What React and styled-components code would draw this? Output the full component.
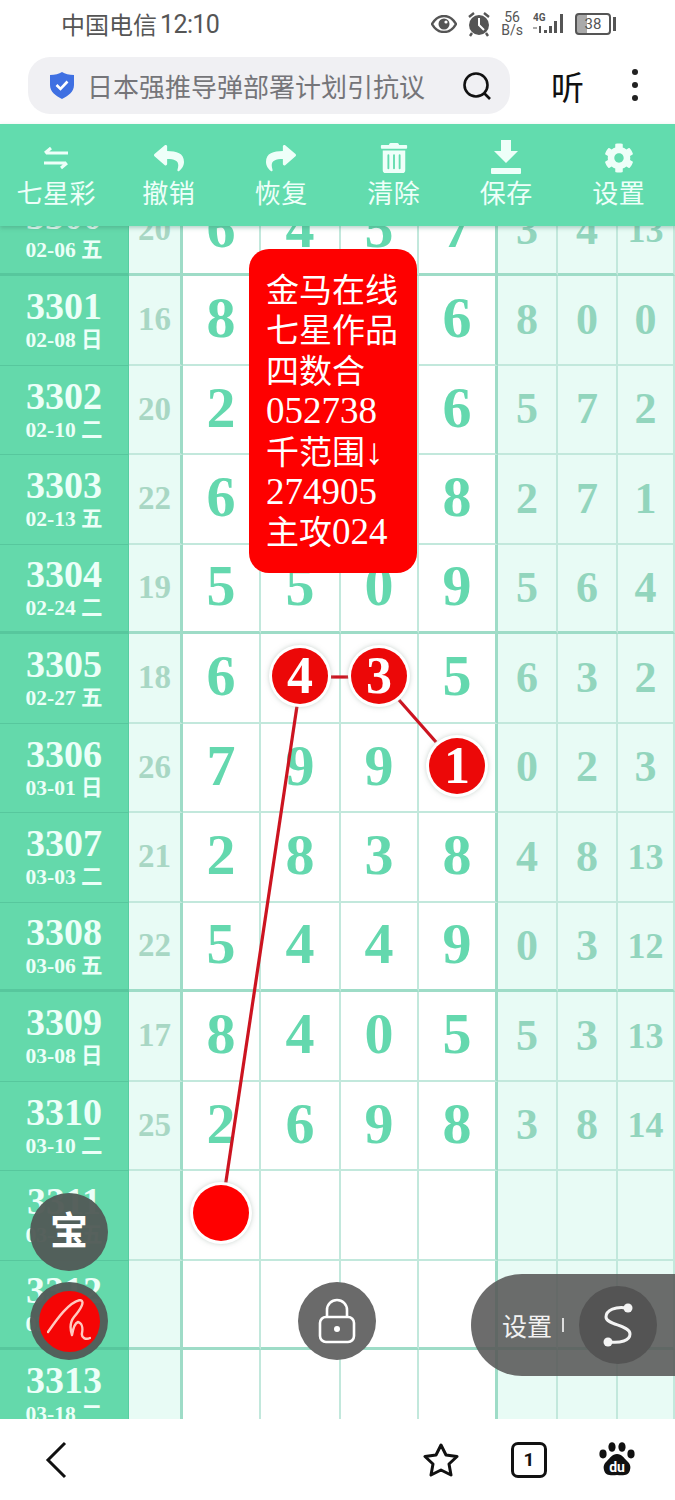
import React from 'react'
import styled, { createGlobalStyle } from 'styled-components'
import { FaReply, FaShare, FaTrashAlt, FaCog } from 'react-icons/fa'

const SANS = '"Noto Sans CJK SC", "Noto Sans", sans-serif'
const SERIF = '"Liberation Serif", "Noto Sans CJK SC", serif'

const Global = createGlobalStyle`
    html, body {
        margin: 0;
        padding: 0;
        background: #fff;
    }
    body {
        font-family: ${SANS};
    }
`

const Page = styled.div`
    position: relative;
    width: 675px;
    height: 1500px;
    overflow: hidden;
    display: flex;
    flex-direction: column;
    background: #fff;
`

const StatusBar = styled.div`
    height: 52px;
    display: flex;
    align-items: center;
    justify-content: space-between;
    padding: 0 64px 4px 61px;
    box-sizing: border-box;
    color: #555;
`

const Carrier = styled.div`
    font-size: 24px;
    line-height: 1;
    display: flex;
    align-items: center;
    gap: 3px;
`

const Clock = styled.span`
    font-family: "Roboto", sans-serif;
    font-size: 25px;
    letter-spacing: -0.6px;
`

const StatusIcons = styled.div`
    display: flex;
    align-items: center;
    gap: 10px;
    color: #555;
`

const Speed = styled.div`
    font-family: "Roboto", sans-serif;
    font-size: 14px;
    line-height: 13px;
    text-align: center;
`

const Battery = styled.div`
    position: relative;
    width: 32px;
    height: 18px;
    border: 2px solid #555;
    border-radius: 4px;
    font-family: "Roboto", sans-serif;
    font-size: 15px;
    line-height: 18px;
    text-align: center;
    background: linear-gradient(90deg, #aaa 30%, #fff 30%);
    &::after {
        content: '';
        position: absolute;
        right: -7px;
        top: 2px;
        width: 3px;
        height: 14px;
        background: #555;
    }
`

const AddressRow = styled.div`
    height: 72px;
    display: flex;
    align-items: flex-start;
    padding: 5px 0 0 28px;
    box-sizing: border-box;
`

const AddressBar = styled.div`
    width: 482px;
    height: 57px;
    border-radius: 22px;
    background: #f0f0f3;
    display: flex;
    align-items: center;
    padding: 0 18px 0 22px;
    box-sizing: border-box;
`

const AddressText = styled.div`
    flex: 1;
    margin-left: 13px;
    font-size: 26px;
    color: #757579;
    white-space: nowrap;
`

const Listen = styled.div`
    margin: 4px 0 0 41px;
    font-size: 33px;
    line-height: 50px;
    color: #111;
`

const Dots = styled.div`
    margin: 12px 0 0 48px;
    display: flex;
    flex-direction: column;
    gap: 7px;
    span {
        width: 6px;
        height: 6px;
        border-radius: 50%;
        background: #222;
    }
`

const Toolbar = styled.div`
    height: 102px;
    display: grid;
    grid-template-columns: repeat(6, 1fr);
    background: #62dcae;
    box-shadow: 0 2px 4px rgba(60, 130, 105, 0.35);
    position: relative;
    z-index: 2;
`

const Tool = styled.div`
    display: flex;
    flex-direction: column;
    align-items: center;
    color: #eefff9;
`

const ToolIcon = styled.div`
    height: 36px;
    margin-top: 16px;
    display: flex;
    align-items: center;
    justify-content: center;
    font-size: 30px;
`

const ToolLabel = styled.div`
    font-size: 26px;
    line-height: 36px;
    margin-top: -2px;
    letter-spacing: 0.5px;
`

const Scroller = styled.div`
    position: relative;
    height: 1193px;
    overflow: hidden;
    background: #fff;
`

const Board = styled.div`
    margin-top: -39.5px;
`

const Row = styled.div`
    display: grid;
    grid-template-columns: 129px 54px 78px 80px 78px 79px 60px 60px 57px;
    height: 89.5px;
    box-sizing: border-box;
    font-family: ${SERIF};
    font-weight: 700;
`

const Issue = styled.div`
    background: #64d9ab;
    border-bottom: ${p => (p.$strong ? '3px solid #57c79d' : '1px solid #57c79d')};
    border-right: 1px solid #58cda1;
    color: #ecfff8;
    display: flex;
    flex-direction: column;
    align-items: center;
    padding-top: ${p => (p.$strong ? '11px' : '12px')};
    box-sizing: border-box;
`

const IssueNo = styled.div`
    font-size: 38px;
    line-height: 36px;
`

const IssueDate = styled.div`
    font-size: 21.5px;
    line-height: 32px;
    white-space: nowrap;
`

const Cell = styled.div`
    position: relative;
    display: flex;
    align-items: center;
    justify-content: center;
    box-sizing: border-box;
    padding-bottom: ${p => (p.$main ? '3px' : '0')};
    background: ${p => (p.$main ? '#fff' : '#e8fbf5')};
    border-right: ${p => (p.$edge ? '3px solid #9edcc7' : '2px solid #c2e8dc')};
    border-bottom: ${p => (p.$strong ? '3px solid #9edcc7' : '2px solid #c2e8dc')};
    color: ${p => p.$color};
    font-size: ${p => p.$size}px;
    line-height: 1;
`

const Ball = styled.div`
    position: relative;
    z-index: 2;
    flex: none;
    width: 56px;
    height: 56px;
    border-radius: 50%;
    background: ${p => (p.$blank ? '#ff0000' : '#ec0808')};
    box-shadow: 0 0 0 3px #fff, 0 0 5px 3px rgba(150, 170, 160, 0.5);
    color: #fff;
    font-size: 52px;
    line-height: 56px;
    text-align: center;
`

const Lines = styled.svg`
    position: absolute;
    left: 0;
    top: 0;
    z-index: 1;
`

const Tip = styled.div`
    position: absolute;
    left: 249px;
    top: 249px;
    z-index: 3;
    width: 168px;
    height: 324px;
    box-sizing: border-box;
    padding: 19px 0 0 17px;
    border-radius: 20px;
    background: #fe0000;
    color: #fff;
    font-size: 33px;
    line-height: 40.4px;
    white-space: nowrap;
`

const TipNum = styled.span`
    font-family: ${SERIF};
    font-size: 37px;
    line-height: 0;
`

const Round = styled.div`
    position: absolute;
    z-index: 3;
    left: ${p => p.$x - 39}px;
    top: ${p => p.$y - 39}px;
    width: 78px;
    height: 78px;
    border-radius: 50%;
    background: ${p => p.$bg};
    color: #fff;
    display: flex;
    align-items: center;
    justify-content: center;
    font-size: 38px;
`

const RoundLabel = styled.span`
    font-weight: 700;
    line-height: 1;
    margin-top: -8px;
`

const RedDisc = styled.div`
    width: 61px;
    height: 61px;
    border-radius: 50%;
    background: #f50505;
    display: flex;
    align-items: center;
    justify-content: center;
`

const Pill = styled.div`
    position: absolute;
    z-index: 3;
    left: 471px;
    top: 1274px;
    width: 204px;
    height: 102px;
    border-radius: 51px 0 0 51px;
    background: rgba(88, 88, 88, 0.88);
    color: #f2f2f2;
    display: flex;
    align-items: center;
    box-sizing: border-box;
    padding-left: 31px;
    font-size: 25px;
`

const PillTick = styled.span`
    width: 2px;
    height: 14px;
    margin-left: 10px;
    background: #ddd;
`

const PillKnob = styled.div`
    width: 78px;
    height: 78px;
    margin-left: 15px;
    border-radius: 50%;
    background: #545454;
    display: flex;
    align-items: center;
    justify-content: center;
`

const BottomBar = styled.div`
    height: 81px;
    display: flex;
    align-items: center;
    padding: 0 40px 0 44px;
    box-sizing: border-box;
    background: #fff;
    position: relative;
`

const BottomRight = styled.div`
    margin-left: auto;
    display: flex;
    align-items: center;
    gap: 52px;
`

const PageBox = styled.div`
    width: 30px;
    height: 30px;
    border: 3px solid #111;
    border-radius: 7px;
    font-family: "Roboto", sans-serif;
    font-weight: 700;
    font-size: 19px;
    line-height: 30px;
    text-align: center;
    color: #111;
`

const Paw = styled.div`
    position: relative;
    width: 36px;
    height: 36px;
`

const PawText = styled.span`
    position: absolute;
    left: 0;
    right: 0;
    top: 17px;
    text-align: center;
    font-family: "Roboto", sans-serif;
    font-weight: 700;
    font-size: 14px;
    line-height: 16px;
    color: #fff;
`

const rows = [
    ['3300', '02-06 五', 20, 6, 4, 5, 7, 3, 4, 13],
    ['3301', '02-08 日', 16, 8, 3, 2, 6, 8, 0, 0],
    ['3302', '02-10 二', 20, 2, 7, 5, 6, 5, 7, 2],
    ['3303', '02-13 五', 22, 6, 0, 8, 8, 2, 7, 1],
    ['3304', '02-24 二', 19, 5, 5, 0, 9, 5, 6, 4],
    ['3305', '02-27 五', 18, 6, '4*', '3*', 5, 6, 3, 2],
    ['3306', '03-01 日', 26, 7, 9, 9, '1*', 0, 2, 3],
    ['3307', '03-03 二', 21, 2, 8, 3, 8, 4, 8, 13],
    ['3308', '03-06 五', 22, 5, 4, 4, 9, 0, 3, 12],
    ['3309', '03-08 日', 17, 8, 4, 0, 5, 5, 3, 13],
    ['3310', '03-10 二', 25, 2, 6, 9, 8, 3, 8, 14],
    ['3311', '03-13 五', '', '*', '', '', '', '', '', ''],
    ['3312', '03-15 日', '', '', '', '', '', '', '', ''],
    ['3313', '03-18 二', '', '', '', '', '', '', '', ''],
]

const SwapIcon = () => (
    <svg width="28" height="24" viewBox="0 0 28 24" fill="none" stroke="currentColor" strokeWidth="3">
        <path d="M26 7H4M9 2L3 7" />
        <path d="M2 17H24M19 22L25 17" />
    </svg>
)

const DownloadIcon = () => (
    <svg width="32" height="36" viewBox="0 0 32 36" fill="currentColor">
        <path d="M11 0h10v11h7L16 23 4 11h7z" />
        <rect x="1" y="28" width="30" height="6" rx="1" />
    </svg>
)

const EyeIcon = () => (
    <svg width="26" height="18" viewBox="0 0 26 18">
        <path d="M1 9C5 2 9 1 13 1s8 1 12 8c-4 7-8 8-12 8S5 16 1 9z" fill="none" stroke="#555" strokeWidth="2.4" />
        <circle cx="13" cy="9" r="5.5" fill="#555" />
        <circle cx="15" cy="7" r="1.6" fill="#fff" />
    </svg>
)

const AlarmIcon = () => (
    <svg width="24" height="26" viewBox="0 0 24 26">
        <circle cx="12" cy="14" r="10" fill="#555" />
        <path d="M12 7v7l5 5" fill="none" stroke="#fff" strokeWidth="2" />
        <path d="M2 6l5-4M22 6l-5-4" stroke="#555" strokeWidth="2.4" />
        <path d="M5 22l-2 3M19 22l2 3" stroke="#555" strokeWidth="2.4" />
    </svg>
)

const SignalIcon = () => (
    <svg width="32" height="24" viewBox="0 0 32 24" fill="#555">
        <text x="0" y="9" fontSize="10" fontWeight="700" fontFamily="Roboto, sans-serif">4G</text>
        <rect x="0" y="15" width="4" height="2" fill="#aaa" />
        <rect x="6" y="14" width="2" height="7" />
        <rect x="11" y="18" width="3" height="3" />
        <rect x="16" y="14" width="3" height="7" />
        <rect x="21" y="9" width="3" height="12" />
        <rect x="27" y="2" width="3" height="19" />
    </svg>
)

const Shield = () => (
    <svg width="24" height="27" viewBox="0 0 24 27">
        <path d="M12 0c3 2 7 3 12 3v10c0 7-6 11-12 14C6 24 0 20 0 13V3c5 0 9-1 12-3z" fill="#3f70e2" />
        <path d="M6.5 13l4 4 7-7.5" fill="none" stroke="#fff" strokeWidth="2.6" />
    </svg>
)

const SearchIcon = () => (
    <svg width="30" height="30" viewBox="0 0 30 30" fill="none" stroke="#111" strokeWidth="2.6">
        <circle cx="14" cy="14" r="11.5" />
        <path d="M22 22l6 6" />
    </svg>
)

const LockIcon = () => (
    <svg width="38" height="46" viewBox="0 0 38 46" fill="none" stroke="#fff" strokeWidth="2.6">
        <path d="M9 19v-7a10 10 0 0 1 20 0v7" />
        <rect x="2" y="19" width="34" height="25" rx="6" />
        <circle cx="19" cy="31" r="3" fill="#fff" stroke="none" />
    </svg>
)

const Squiggle = () => (
    <svg width="44" height="44" viewBox="0 0 44 44" fill="none" stroke="#ffc9c0" strokeWidth="2.4" strokeLinecap="round" strokeLinejoin="round">
        <path d="M1 33C10 20 22 3 33 1c6 1 0 10-6 17-4 5-4 12-2 18 1-6 3-12 6-13 4 1 5 6 4 11-1 5 4 7 8 5" />
    </svg>
)

const SIcon = () => (
    <svg width="32" height="46" viewBox="0 0 32 46" fill="none" stroke="#f4f4f4" strokeWidth="3">
        <path d="M25 6C14 4 4 8 4 15c0 8 24 8 24 17 0 7-10 9-20 8" />
        <circle cx="26" cy="6" r="4.5" fill="#f4f4f4" stroke="none" />
        <circle cx="6" cy="40" r="4.5" fill="#f4f4f4" stroke="none" />
    </svg>
)

const StarIcon = () => (
    <svg width="36" height="34" viewBox="0 0 36 34" fill="none" stroke="#111" strokeWidth="3" strokeLinejoin="round">
        <path d="M18 2l5 10 11 1.5-8 7.5 2 11-10-5-10 5 2-11-8-7.5L13 12z" />
    </svg>
)

const tools = [
    { label: '七星彩', icon: <SwapIcon /> },
    { label: '撤销', icon: <FaReply /> },
    { label: '恢复', icon: <FaShare /> },
    { label: '清除', icon: <FaTrashAlt /> },
    { label: '保存', icon: <DownloadIcon /> },
    { label: '设置', icon: <FaCog /> },
]

// cols 1-4 are the main digits, 5-7 the pale right side
const renderCell = (value, col, strong) => {
    const marked = typeof value === 'string' && value.includes('*')
    const text = marked ? value.replace('*', '') : value
    const isSum = col === 0
    const isMain = col >= 1 && col <= 4
    const tall = String(text).length > 1
    let color = '#92d5bd'
    if (isSum) color = '#a8d7c4'
    if (isMain) color = '#64d8ae'
    let size = tall ? 36 : 44
    if (isSum) size = 33
    if (isMain) size = 58
    return (
        <Cell
            key={col}
            $main={isMain}
            $edge={col === 0 || col === 4}
            $strong={strong}
            $color={color}
            $size={size}
        >
            {marked ? <Ball $blank={!text}>{text}</Ball> : text}
        </Cell>
    )
}

function App() {
    return (
        <Page>
            <Global />
            <StatusBar>
                <Carrier>
                    <span>中国电信</span>
                    <Clock>12:10</Clock>
                </Carrier>
                <StatusIcons>
                    <EyeIcon />
                    <AlarmIcon />
                    <Speed>
                        56
                        <br />
                        B/s
                    </Speed>
                    <SignalIcon />
                    <Battery>38</Battery>
                </StatusIcons>
            </StatusBar>
            <AddressRow>
                <AddressBar>
                    <Shield />
                    <AddressText>日本强推导弹部署计划引抗议</AddressText>
                    <SearchIcon />
                </AddressBar>
                <Listen>听</Listen>
                <Dots>
                    <span />
                    <span />
                    <span />
                </Dots>
            </AddressRow>
            <Toolbar>
                {tools.map(t => (
                    <Tool key={t.label}>
                        <ToolIcon>{t.icon}</ToolIcon>
                        <ToolLabel>{t.label}</ToolLabel>
                    </Tool>
                ))}
            </Toolbar>
            <Scroller>
                <Board>
                    {rows.map((r, i) => {
                        const strong = i % 4 === 0
                        return (
                            <Row key={r[0]}>
                                <Issue $strong={strong}>
                                    <IssueNo>{r[0]}</IssueNo>
                                    <IssueDate>{r[1]}</IssueDate>
                                </Issue>
                                {r.slice(2).map((v, col) => renderCell(v, col, strong))}
                            </Row>
                        )
                    })}
                </Board>
                <Lines width="675" height="1193" viewBox="0 226 675 1193" fill="none" stroke="#cc1420" strokeWidth="3.2">
                    <path d="M297 706L225 1188" />
                    <path d="M331 677H353" />
                    <path d="M399 700L436 742" />
                </Lines>
            </Scroller>
            <BottomBar>
                <svg width="24" height="38" viewBox="0 0 24 38" fill="none" stroke="#111" strokeWidth="3">
                    <path d="M21 2L4 19l17 17" />
                </svg>
                <BottomRight>
                    <StarIcon />
                    <PageBox>1</PageBox>
                    <Paw>
                        <svg width="36" height="36" viewBox="0 0 36 36" fill="#111">
                            <ellipse cx="4" cy="12" rx="3.6" ry="4.4" />
                            <ellipse cx="13" cy="5" rx="3.6" ry="4.8" />
                            <ellipse cx="23" cy="5" rx="3.6" ry="4.8" />
                            <ellipse cx="32" cy="12" rx="3.6" ry="4.4" />
                            <path d="M18 12c5 0 7 4 10 7 3 3 4 5 3 9-1 5-6 6-13 5-7 1-12 0-13-5-1-4 0-6 3-9 3-3 5-7 10-7z" />
                        </svg>
                        <PawText>du</PawText>
                    </Paw>
                </BottomRight>
            </BottomBar>
            <Tip>
                金马在线
                <br />
                七星作品
                <br />
                四数合
                <br />
                <TipNum>052738</TipNum>
                <br />
                千范围<TipNum>↓</TipNum>
                <br />
                <TipNum>274905</TipNum>
                <br />
                主攻<TipNum>024</TipNum>
            </Tip>
            <Round $x={69} $y={1232} $bg="rgba(82, 92, 88, 0.97)">
                <RoundLabel>宝</RoundLabel>
            </Round>
            <Round $x={69} $y={1321} $bg="rgba(82, 92, 88, 0.97)">
                <RedDisc>
                    <Squiggle />
                </RedDisc>
            </Round>
            <Round $x={337} $y={1321} $bg="#6a6a6a">
                <LockIcon />
            </Round>
            <Pill>
                设置
                <PillTick />
                <PillKnob>
                    <SIcon />
                </PillKnob>
            </Pill>
        </Page>
    )
}

export default App
